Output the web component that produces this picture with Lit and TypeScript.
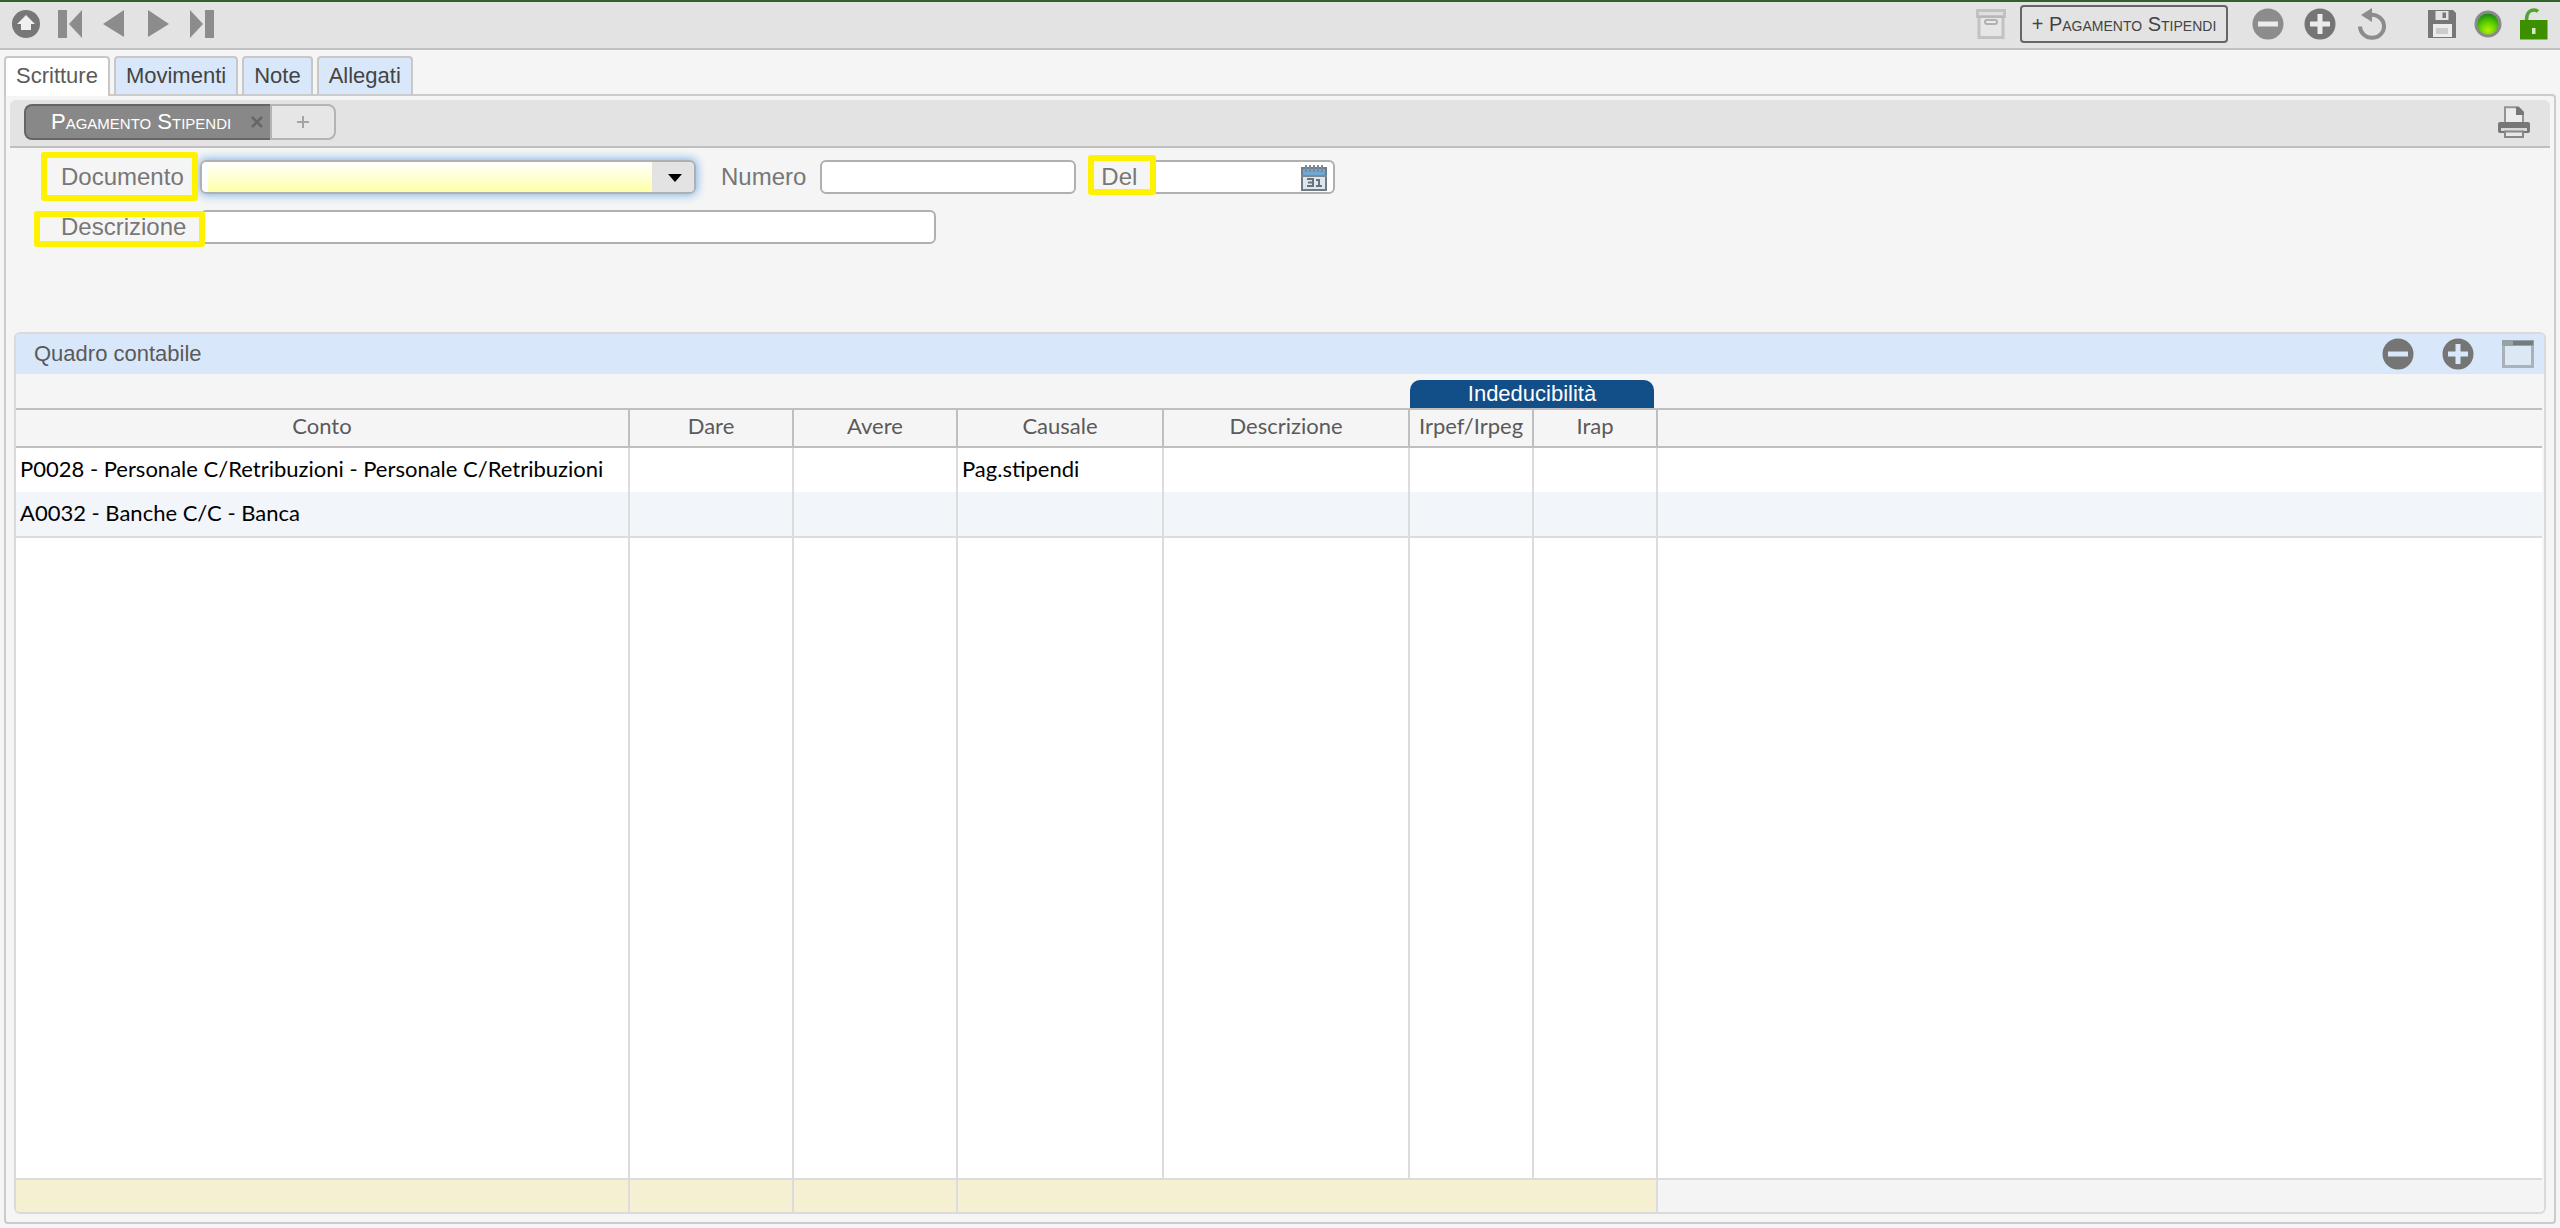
import { LitElement, html, css, svg, nothing } from "lit";
import { customElement, state } from "lit/decorators.js";

const icon = (w: number, h: number, body: unknown) =>
  html`<svg width=${w} height=${h} viewBox="0 0 ${w} ${h}" aria-hidden="true">${body}</svg>`;

const icons = {
  up: icon(28, 28, svg`<circle cx="14" cy="14" r="14" fill="#777"/><path d="M14 5 23 14h-4v6H9v-6H5z" fill="#f0f0f0"/>`),
  first: icon(28, 28, svg`<path d="M2 0h9v28H2zM26 0v28L13 14z" fill="#8c8c8c"/>`),
  prev: icon(28, 28, svg`<path d="M24 0v27L3 14z" fill="#8c8c8c"/>`),
  next: icon(28, 28, svg`<path d="M4 0v27L25 14z" fill="#8c8c8c"/>`),
  last: icon(28, 28, svg`<path d="M2 0v28L15 14zM17 0h9v28h-9z" fill="#8c8c8c"/>`),
  archive: icon(30, 30, svg`<g fill="none" stroke="#c2c2c2" stroke-width="3"><path d="M1.500 1.500h27v6h-27z" fill="#e0e0e0"/><path d="M3 8v20.500h24V8" fill="#e6e6e6"/></g><path d="M2 8h26" stroke="#b8b8b8" stroke-width="2"/><rect x="9" y="11" width="12" height="4" rx="2" fill="#ececec" stroke="#b0b0b0" stroke-width="2"/>`),
  minus: (c: string, bg: string) => icon(32, 32, svg`<circle cx="16" cy="16" r="15.500" fill=${c}/><path d="M6 13.500h20v5H6z" fill=${bg}/>`),
  plus: (bg: string) => icon(32, 32, svg`<circle cx="16" cy="16" r="15.500" fill="#757575"/><path d="M13.500 6h5v7.500H26v5h-7.500V26h-5v-7.500H6v-5h7.500z" fill=${bg}/>`),
  reset: icon(32, 32, svg`<path d="M4 18.500A12 11.500 0 1 0 14 7" fill="none" stroke="#8c8c8c" stroke-width="4"/><path d="M5 7 16 0v14z" fill="#8c8c8c"/>`),
  save: icon(28, 28, svg`<path d="M0 0h25l3 3v25H0z" fill="#777"/><path d="M7.500 1h13v9h-13z" fill="#e3e3e3"/><path d="M14.500 2.500h3.500v5.500h-3.500z" fill="#777"/><path d="M5 14h19v13H5z" fill="#ececec"/><path d="M8 18h12v6H8z" fill="#ccc"/>`),
  led: icon(28, 28, svg`<defs><radialGradient id="led" cx=".5" cy=".8" r=".75"><stop offset="0" stop-color="#b4f000"/><stop offset=".5" stop-color="#62d200"/><stop offset="1" stop-color="#1f8f10"/></radialGradient></defs><circle cx="14" cy="14" r="13.500" fill="#8a8a8a"/><circle cx="14" cy="14" r="10.500" fill="url(#led)"/>`),
  lock: icon(28, 32, svg`<path d="M6.500 12C6.500 5 10 2 14 2c2 0 3 .5 4 1.500" fill="none" stroke="#53a32e" stroke-width="3.500"/><path d="M0 12h27.500v19.500H0z" fill="#3c9000"/><path d="M12 20h3.500v6H12z" fill="#d6e8c8"/>`),
  printer: icon(32, 32, svg`<path d="M7 18V1.200h13l5 5.500V18" fill="#ececec" stroke="#949494" stroke-width="2"/><path d="M18 1h3l5 5v3h-8z" fill="#777"/><path d="M2 16h28q2 0 2 2v7q0 2-2 2H2q-2 0-2-2v-7q0-2 2-2z" fill="#777"/><path d="M3 22h26v3H3z" fill="#d8d8d8"/><path d="M7 25.500h18V31H7z" fill="#e8e8e8" stroke="#888" stroke-width="2"/>`),
  window: icon(32, 28, svg`<path d="M1.500 1.500h29v25h-29z" fill="#dde8f5" stroke="#a9b2bb" stroke-width="3"/><path d="M0 0h32v6H0z" fill="#98a0a8"/><path d="M11 1h20v4H11z" fill="#757b80"/>`),
  calendar: icon(26, 26, svg`<path d="M1 3h24v22H1z" fill="#dfe6ec" stroke="#6f7c88" stroke-width="2"/><path d="M2 4h22v7H2z" fill="#6fa8d2"/><path d="M5 0v7M9 0v7M13 0v7M17 0v7M21 0v7" stroke="#7d8a96" stroke-width="2"/><path d="M0 11h26" stroke="#7d8994" stroke-width="2"/><path d="M6 14h6v7H6M7 17.500h5M15 15h3v6M15 21h6" fill="none" stroke="#66727e" stroke-width="2"/>`),
  close: icon(12, 12, svg`<path d="M1 1 11 11M11 1 1 11" stroke="#666" stroke-width="2.500"/>`),
  add: icon(12, 12, svg`<path d="M6 0v12M0 6h12" stroke="#a4a4a4" stroke-width="2"/>`),
};

interface Entry {
  conto: string;
  dare?: string;
  avere?: string;
  causale?: string;
  descrizione?: string;
  irpef?: string;
  irap?: string;
}

const COLUMNS: { key: keyof Entry; label: string }[] = [
  { key: "conto", label: "Conto" },
  { key: "dare", label: "Dare" },
  { key: "avere", label: "Avere" },
  { key: "causale", label: "Causale" },
  { key: "descrizione", label: "Descrizione" },
  { key: "irpef", label: "Irpef/Irpeg" },
  { key: "irap", label: "Irap" },
];

@customElement("app-toolbar")
export class AppToolbar extends LitElement {
  static styles = css`
    :host { display: block; }
    .bar {
      display: flex; align-items: center; justify-content: space-between;
      box-sizing: border-box; height: 50px; padding: 0 12px 2px;
      border-top: 2px solid #2f6426; border-bottom: 2px solid #c1c1c1; background: #e3e3e3;
    }
    .nav { display: flex; align-items: center; gap: 16px; }
    .actions { display: flex; align-items: center; gap: 40px; }
    .group { display: flex; align-items: center; gap: 20px; }
    .status { display: flex; align-items: center; gap: 18px; }
    button { display: block; padding: 0; border: 0; background: none; cursor: pointer; }
    svg { display: block; }
    .new {
      display: flex; align-items: center; justify-content: center;
      box-sizing: border-box; height: 38px; min-width: 208px; padding: 0 8px; margin-right: 4px;
      border: 2px solid #666; border-radius: 4px; color: #444;
      font: 20px "Liberation Sans", Arial, sans-serif; font-variant: small-caps; white-space: nowrap;
    }
    .archive { margin-right: -6px; }
  `;
  render() {
    const b = (label: string, i: unknown) => html`<button aria-label=${label}>${i}</button>`;
    return html`<header class="bar">
      <nav class="nav">
        ${b("Su", icons.up)}${b("Primo", icons.first)}${b("Precedente", icons.prev)}${b("Successivo", icons.next)}${b("Ultimo", icons.last)}
      </nav>
      <div class="actions">
        <div class="group">
          <button class="archive" aria-label="Archivio">${icons.archive}</button>
          <button class="new">+ Pagamento Stipendi</button>
          ${b("Elimina", icons.minus("#8c8c8c", "#ececec"))}${b("Aggiungi", icons.plus("#ececec"))}${b("Ripristina", icons.reset)}
        </div>
        <div class="status">${b("Salva", icons.save)}${b("Stato", icons.led)}${b("Sblocca", icons.lock)}</div>
      </div>
    </header>`;
  }
}

@customElement("entry-form")
export class EntryForm extends LitElement {
  static styles = css`
    :host { display: block; }
    .form {
      display: flex; flex-direction: column; gap: 16px; padding: 12px 55px 88px;
      font: 24px "Liberation Sans", Arial, sans-serif; color: #777;
    }
    .row { display: flex; align-items: center; gap: 25px; height: 34px; }
    .field { display: flex; align-items: center; gap: 14px; }
    label { position: relative; line-height: 34px; white-space: nowrap; }
    .lead { min-width: 125px; }
    .mark::after {
      content: ""; position: absolute; z-index: 1; box-sizing: border-box;
      border: 6px solid #fff200; border-radius: 3px; pointer-events: none;
    }
    .mark-doc::after { inset: -8px -12px -7px -20px; }
    .mark-desc::after { inset: 1px -19px -3px -27px; }
    .mark-del::after { inset: -5px -19px -1px -13px; }
    input, select {
      box-sizing: border-box; height: 34px; margin: 0; padding: 0 8px;
      border: 2px solid #b0b0b0; border-radius: 6px; background: #fff;
      font: 22px "Liberation Sans", Arial, sans-serif; color: #222; outline: none;
    }
    .picker { position: relative; display: flex; }
    .combo {
      appearance: none; width: 496px;
      background:
        linear-gradient(#e3e3e3, #e3e3e3) right / 42px 100% no-repeat,
        linear-gradient(to right, #fff 6px, transparent 6px),
        linear-gradient(#fff, #ffffa8);
      background-origin: padding-box;
      box-shadow: 0 0 10px 1px #7db1e8;
    }
    .arrow {
      position: absolute; right: 14px; top: 14px; pointer-events: none;
      border: 7px solid transparent; border-top: 8px solid #000; border-bottom: 0;
    }
    .number { width: 256px; }
    .date { width: 184px; padding-right: 40px; }
    .text { width: 736px; }
    .cal { position: absolute; right: 8px; top: 5px; padding: 0; border: 0; background: none; }
    .cal svg { display: block; }
  `;
  render() {
    return html`<form class="form" @submit=${(e: Event) => e.preventDefault()}>
      <div class="row">
        <div class="field">
          <label class="lead mark mark-doc" for="doc">Documento</label>
          <div class="picker"><select class="combo" id="doc"><option></option></select><i class="arrow"></i></div>
        </div>
        <div class="field"><label for="num">Numero</label><input class="number" id="num" type="text" /></div>
        <div class="field">
          <label class="mark mark-del" for="del">Del</label>
          <div class="picker"><input class="date" id="del" type="text" /><button class="cal" type="button" aria-label="Calendario">${icons.calendar}</button></div>
        </div>
      </div>
      <div class="row">
        <div class="field"><label class="lead mark mark-desc" for="desc">Descrizione</label><input class="text" id="desc" type="text" /></div>
      </div>
    </form>`;
  }
}

@customElement("ledger-panel")
export class LedgerPanel extends LitElement {
  static properties = { rows: { attribute: false } };
  static styles = css`
    :host { display: flex; flex-direction: column; }
    .panel {
      flex: 1; display: flex; flex-direction: column;
      border: 2px solid #dadada; border-radius: 6px; background: #f5f5f5; overflow: hidden;
    }
    .head {
      display: flex; align-items: center; justify-content: space-between;
      height: 40px; padding: 0 10px 0 18px; background: #d8e8fa;
    }
    h2 { margin: 0; font: 22px "Liberation Sans", Arial, sans-serif; color: #5a5a5a; }
    .tools { display: flex; align-items: center; gap: 28px; }
    .tools button { padding: 0; border: 0; background: none; }
    svg { display: block; }
    .body { flex: 1; display: grid; padding-right: 2px; }
    table {
      width: 100%; height: 100%; table-layout: fixed; border-collapse: separate; border-spacing: 0;
      font: 22px Lato, "Open Sans", sans-serif; color: #000;
    }
    th, td { box-sizing: border-box; padding: 0; font-weight: 400; border: 0 solid #dcdcdc; white-space: nowrap; }
    .c-conto { width: 614px; }
    .c-amount { width: 164px; }
    .c-causale { width: 206px; }
    .c-descr { width: 246px; }
    .c-tax { width: 124px; }
    thead th { border-color: #bfbfbf; border-bottom-width: 2px; color: #5a5a5a; }
    .groups th { height: 36px; vertical-align: bottom; }
    .cap {
      margin-right: 4px; border-radius: 10px 10px 0 0; background: #124e88; color: #fff;
      font: 22px/28px "Liberation Sans", Arial, sans-serif;
    }
    .titles th { height: 38px; line-height: 32px; padding-bottom: 4px; border-right-width: 2px; }
    tbody td { height: 44px; padding: 0 4px 3px; border-right-width: 2px; background: #fff; }
    tbody .alt td { height: 46px; background: #f2f5fa; border-bottom-width: 2px; }
    tbody .fill td { height: auto; border-bottom-width: 2px; }
    tfoot td { height: 32px; border-right-width: 2px; background: #f6f0d3; }
    tr .rest { border-right-width: 0; }
    tfoot .rest { background: #f4f4f4; }
  `;
  declare rows: Entry[];
  constructor() {
    super();
    this.rows = [];
  }
  render() {
    return html`<section class="panel">
      <div class="head">
        <h2>Quadro contabile</h2>
        <div class="tools">
          <button aria-label="Rimuovi riga">${icons.minus("#757575", "#d8e8fa")}</button>
          <button aria-label="Aggiungi riga">${icons.plus("#d8e8fa")}</button>
          <button aria-label="Espandi">${icons.window}</button>
        </div>
      </div>
      <div class="body">
        <table>
          <colgroup>
            <col class="c-conto" /><col class="c-amount" /><col class="c-amount" /><col class="c-causale" />
            <col class="c-descr" /><col class="c-tax" /><col class="c-tax" /><col />
          </colgroup>
          <thead>
            <tr class="groups"><th colspan="5"></th><th colspan="2"><div class="cap">Indeducibilità</div></th><th></th></tr>
            <tr class="titles">${COLUMNS.map((c) => html`<th scope="col">${c.label}</th>`)}<th class="rest"></th></tr>
          </thead>
          <tbody>
            ${this.rows.map((r, i) => html`<tr class=${i % 2 ? "alt" : "plain"}>${COLUMNS.map((c) => html`<td>${r[c.key] ?? nothing}</td>`)}<td class="rest"></td></tr>`)}
            <tr class="fill">${COLUMNS.map(() => html`<td></td>`)}<td class="rest"></td></tr>
          </tbody>
          <tfoot><tr><td></td><td></td><td></td><td colspan="4"></td><td class="rest"></td></tr></tfoot>
        </table>
      </div>
    </section>`;
  }
}

@customElement("app-root")
export class AppRoot extends LitElement {
  static styles = css`
    :host {
      display: flex; flex-direction: column; box-sizing: border-box; min-height: 100vh; padding-bottom: 4px;
      background: #f5f5f5; font: 22px "Liberation Sans", Arial, sans-serif;
    }
    button { font: inherit; cursor: pointer; }
    svg { display: block; }
    .tabs { display: flex; align-items: flex-end; gap: 4px; padding: 6px 4px 0; }
    .tab {
      box-sizing: border-box; height: 38px; padding: 0 10px; line-height: 36px;
      border: 2px solid #c8c8c8; border-bottom: 0; border-radius: 4px 4px 0 0;
      background: #d8e8fa; color: #444;
    }
    .tab.on { z-index: 1; height: 40px; margin-bottom: -2px; padding-bottom: 2px; background: #fff; color: #5a5a5a; }
    .sheet {
      flex: 1; display: flex; flex-direction: column; margin: 0 4px;
      border: 2px solid #cbcbcb; border-radius: 0 4px 4px 4px;
    }
    .subbar {
      display: flex; align-items: center; justify-content: space-between; box-sizing: border-box;
      height: 48px; margin: 4px 4px 0; padding: 0 20px 2px 14px;
      border-bottom: 2px solid #bfbfbf; border-radius: 6px 6px 0 0; background: #e3e3e3;
    }
    .docs { display: flex; height: 36px; }
    .doc {
      display: flex; align-items: center; justify-content: space-between; box-sizing: border-box;
      min-width: 246px; padding: 0 7px 0 25px; border: 2px solid #666; border-right: 0;
      border-radius: 8px 0 0 8px; background: #888;
    }
    .doc button, .print { padding: 0; border: 0; background: none; }
    .doc .name { color: #fff; font-variant: small-caps; white-space: nowrap; }
    .add {
      display: flex; align-items: center; justify-content: center; box-sizing: border-box; width: 66px;
      padding: 0; border: 2px solid #b4b4b4; border-radius: 0 8px 8px 0; background: #e6e6e6;
    }
    .ledger { flex: 1; margin: 0 8px 8px; }
  `;
  @state() private active = "Scritture";
  private rows: Entry[] = [
    { conto: "P0028 - Personale C/Retribuzioni - Personale C/Retribuzioni", causale: "Pag.stipendi" },
    { conto: "A0032 - Banche C/C - Banca" },
  ];
  render() {
    return html`
      <app-toolbar></app-toolbar>
      <nav class="tabs" role="tablist">
        ${["Scritture", "Movimenti", "Note", "Allegati"].map(
          (t) => html`<button role="tab" class="tab ${t === this.active ? "on" : ""}" aria-selected=${t === this.active} @click=${() => (this.active = t)}>${t}</button>`
        )}
      </nav>
      <main class="sheet">
        <div class="subbar">
          <div class="docs">
            <div class="doc"><button class="name">Pagamento Stipendi</button><button aria-label="Chiudi">${icons.close}</button></div>
            <button class="add" aria-label="Nuova scheda">${icons.add}</button>
          </div>
          <button class="print" aria-label="Stampa">${icons.printer}</button>
        </div>
        <entry-form></entry-form>
        <ledger-panel class="ledger" .rows=${this.rows}></ledger-panel>
      </main>
    `;
  }
}
